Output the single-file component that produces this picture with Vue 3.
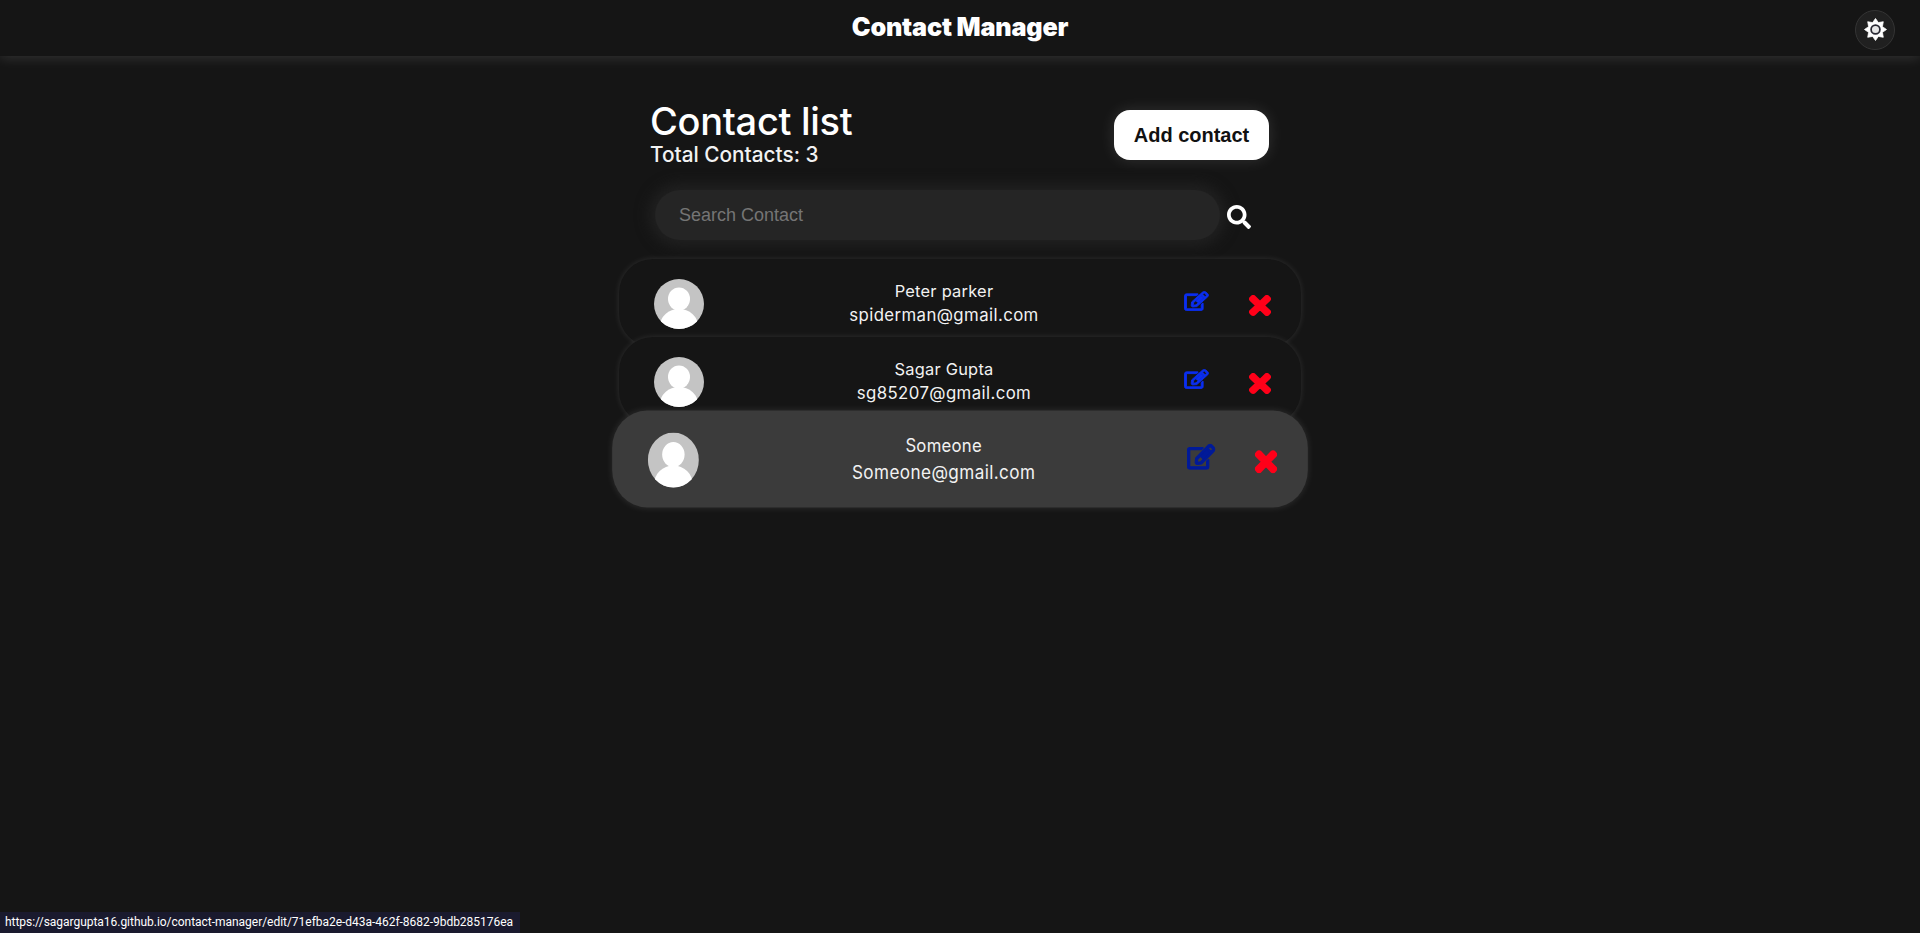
<script setup>
const contacts = [
  { id: 'a', name: 'Peter parker', email: 'spiderman@gmail.com' },
  { id: 'b', name: 'Sagar Gupta', email: 'sg85207@gmail.com' },
  { id: 'c', name: 'Someone', email: 'Someone@gmail.com', hovered: true },
]
const starPoints = Array.from({ length: 16 }, (_, i) => {
  const r = i % 2 === 0 ? 11.5 : 7.8
  const a = (Math.PI * i) / 8 - Math.PI / 2
  return `${(12 + r * Math.cos(a)).toFixed(2)},${(12 + r * Math.sin(a)).toFixed(2)}`
}).join(' ')
</script>

<template>
  <div class="page">
    <header class="topbar">
      <span></span>
      <h1 class="brand">Contact Manager</h1>
      <button class="theme" aria-label="Toggle theme">
        <svg viewBox="0 0 24 24" width="23" height="23">
          <polygon fill="#fff" stroke="#fff" stroke-width="0.8" stroke-linejoin="round" :points="starPoints"/>
          <circle cx="12" cy="12" r="4.6" fill="#e8e8e8" stroke="#2a2a34" stroke-width="1.8"/>
        </svg>
      </button>
    </header>

    <main class="column">
      <section class="head">
        <div>
          <h2 class="title">Contact list</h2>
          <p class="total">Total Contacts: 3</p>
        </div>
        <button class="add">Add contact</button>
      </section>

      <section class="search">
        <input class="search-input" type="text" placeholder="Search Contact" />
        <svg class="search-icon" viewBox="0 0 512 512" width="24" height="24"><path fill="#fff" d="M505 442.7L405.3 343c-4.5-4.5-10.6-7-17-7H372c27.6-35.3 44-79.7 44-128C416 93.1 322.9 0 208 0S0 93.1 0 208s93.1 208 208 208c48.3 0 92.7-16.4 128-44v16.3c0 6.4 2.5 12.5 7 17l99.7 99.7c9.4 9.4 24.6 9.4 33.9 0l28.3-28.3c9.4-9.4 9.4-24.6.1-34zM208 336c-70.7 0-128-57.2-128-128 0-70.7 57.2-128 128-128 70.7 0 128 57.2 128 128 0 70.7-57.2 128-128 128z"/></svg>
      </section>

      <ul class="list">
        <li v-for="c in contacts" :key="c.id" class="card" :class="{ hovered: c.hovered }">
          <svg class="avatar" viewBox="0 0 50 50" width="50" height="50">
            <defs><clipPath :id="'clip-' + c.id"><ellipse cx="25" cy="25" rx="25" ry="25"/></clipPath></defs>
            <g :clip-path="'url(#clip-' + c.id + ')'">
              <rect width="50" height="50" fill="#c4c4c4"/>
              <ellipse cx="25" cy="20" rx="11" ry="11.5" fill="#fff"/>
              <ellipse cx="25" cy="47" rx="19" ry="17" fill="#fff"/>
            </g>
          </svg>
          <div class="info">
            <div class="name">{{ c.name }}</div>
            <div class="email">{{ c.email }}</div>
          </div>
          <svg class="edit" viewBox="-12 -12 600 536" preserveAspectRatio="none" width="25" height="20">
            <path fill="currentColor" stroke="currentColor" stroke-width="22" d="M402.3 344.9l32-32c5-5 13.7-1.5 13.7 5.7V464c0 26.5-21.5 48-48 48H48c-26.5 0-48-21.5-48-48V112c0-26.5 21.5-48 48-48h273.5c7.1 0 10.7 8.6 5.7 13.7l-32 32c-1.5 1.5-3.5 2.3-5.7 2.3H48v352h352V350.5c0-2.1.8-4.1 2.3-5.6zm156.6-201.8L296.3 405.7l-90.4 10c-26.2 2.9-48.5-19.2-45.6-45.6l10-90.4L432.9 17.1c22.9-22.9 59.9-22.9 82.7 0l43.2 43.2c22.9 22.9 22.9 60 .1 82.8zM460.1 174L402 115.9 216.2 301.8l-7.3 65.3 65.3-7.3L460.1 174zm64.8-79.7l-43.2-43.2c-4.1-4.1-10.8-4.1-14.8 0L436 82l58.1 58.1 30.9-30.9c4-4.2 4-10.8-.1-14.9z"/>
            <polygon fill="currentColor" points="402,116 460,174 322,312 264,254"/>
          </svg>
          <svg class="remove" viewBox="-20 60 392 392" preserveAspectRatio="none" width="22" height="21"><path fill="#ff0019" stroke="#ff0019" stroke-width="40" stroke-linejoin="round" d="M242.72 256l100.07-100.07c12.28-12.28 12.28-32.19 0-44.48l-22.24-22.24c-12.28-12.28-32.19-12.28-44.48 0L176 189.28 75.93 89.21c-12.28-12.28-32.19-12.28-44.48 0L9.21 111.45c-12.28 12.28-12.28 32.19 0 44.48L109.28 256 9.21 356.07c-12.28 12.28-12.28 32.19 0 44.48l22.24 22.24c12.28 12.28 32.2 12.28 44.48 0L176 322.72l100.07 100.07c12.28 12.28 32.2 12.28 44.48 0l22.24-22.24c12.28-12.28 12.28-32.19 0-44.48L242.72 256z"/></svg>
        </li>
      </ul>
    </main>

    <div class="status">https://sagargupta16.github.io/contact-manager/edit/71efba2e-d43a-462f-8682-9bdb285176ea</div>
  </div>
</template>

<style>
html, body { margin: 0; background: #151515; }
</style>

<style scoped>
.page {
  position: relative;
  height: 933px;
  overflow: hidden;
  background: #151515;
  color: #fff;
  font-family: Inter, "Liberation Sans", sans-serif;
}
.topbar {
  height: 56px;
  display: grid;
  grid-template-columns: 1fr auto 1fr;
  align-items: center;
  background: #151515;
  box-shadow: 0 2px 12px rgba(255, 255, 255, 0.13);
}
.brand { margin: 0; font-size: 25.2px; font-weight: 900; letter-spacing: -0.2px; line-height: 1; }
.theme {
  justify-self: end;
  margin: 3px 25px 0 0;
  width: 40px;
  height: 40px;
  padding: 0;
  display: flex;
  align-items: center;
  justify-content: center;
  border-radius: 50%;
  background: #202020;
  border: 1px solid #343434;
}
.column { width: 682px; margin: 0 auto; }
.head {
  display: flex;
  justify-content: space-between;
  align-items: flex-start;
  padding: 41px 32px 0 31px;
  height: 93px;
}
.title { margin: 0; font-size: 38px; font-weight: 500; line-height: 48px; letter-spacing: -0.3px; }
.total { margin: -2px 0 0; font-size: 20.8px; font-weight: 500; line-height: 24px; color: #f2f2f2; }
.add {
  margin-top: 13px;
  width: 155px;
  height: 50px;
  padding: 0;
  border: 0;
  border-radius: 16px;
  background: #fff;
  color: #111;
  font: 700 20px "Liberation Sans", Arial, sans-serif;
  box-shadow: 0 0 16px rgba(255, 255, 255, 0.12);
}
.search { display: flex; align-items: center; gap: 7px; padding: 0 0 0 36px; height: 50px; }
.search-input {
  width: 565px;
  height: 50px;
  box-sizing: border-box;
  padding: 0 24px;
  border: 0;
  outline: 0;
  border-radius: 25px;
  background: #252525;
  color: #fff;
  font: 18px "Liberation Sans", Arial, sans-serif;
  box-shadow: 0 0 14px 6px #212121;
}
.search-input::placeholder { color: #757575; opacity: 1; }
.search-icon { margin-top: 3px; }
.list { list-style: none; margin: 19px 0 0; padding: 0; }
.card {
  position: relative;
  height: 88px;
  box-sizing: border-box;
  display: flex;
  align-items: center;
  padding: 0 31px 0 35px;
  border-radius: 34px;
  background: #151515;
  box-shadow: 0 0 6px rgba(255, 255, 255, 0.11);
}
.card + .card { margin-top: -10px; }
.card.hovered {
  background: #3b3b3b;
  transform: scale(1.02, 1.1);
  z-index: 1;
  box-shadow: 0 0 7px rgba(255, 255, 255, 0.1);
}
.avatar { flex: none; margin-top: 2px; }
.info { flex: 1; text-align: center; line-height: 24px; color: #f2f2f2; }
.name { font-size: 16.4px; letter-spacing: 0.25px; }
.email { font-size: 16.8px; letter-spacing: 0.4px; }
.edit { flex: none; color: #0a2ef0; margin-top: -5px; }
.remove { flex: none; margin-left: 40px; margin-right: -1px; margin-top: 4px; }
.hovered .edit { color: #001a99; transform: scale(1.12, 1.18); }
.status {
  position: absolute;
  left: 0;
  bottom: 0;
  height: 21px;
  width: 520px;
  box-sizing: border-box;
  padding: 0 0 0 5px;
  background: #1a1a2e;
  color: #fff;
  font: 12px/21px Roboto, sans-serif;
  letter-spacing: -0.03px;
  white-space: nowrap;
}
</style>
